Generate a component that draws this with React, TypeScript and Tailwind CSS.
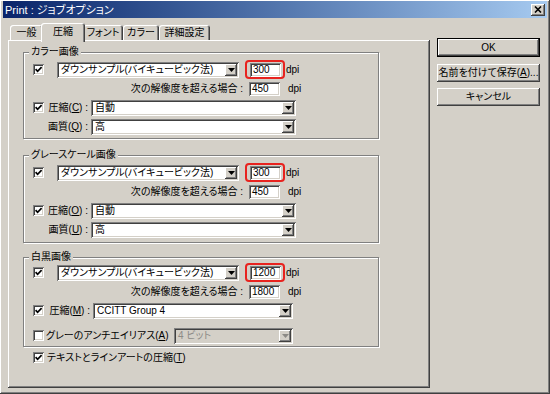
import { ReactNode } from 'react'

const raised =
  'shadow-[inset_-1px_-1px_0_#404040,inset_1px_1px_0_#ffffff,inset_-2px_-2px_0_#808080,inset_2px_2px_0_#d4d0c8]'
const sunken =
  'shadow-[inset_1px_1px_0_#808080,inset_-1px_-1px_0_#ffffff,inset_2px_2px_0_#404040,inset_-2px_-2px_0_#d4d0c8]'
const tab = 'rounded-t-[3px] shadow-[inset_1px_1px_0_#ffffff,inset_-1px_0_0_#404040,inset_-2px_0_0_#808080]'

const K = ({ c }: { c: string }) => <span className="underline underline-offset-[1px]">{c}</span>

const Check = ({ checked }: { checked?: boolean }) => (
  <span className={`flex h-[11px] w-[11px] shrink-0 items-center justify-center bg-white ${sunken}`}>
    {checked && (
      <svg width="11" height="11" viewBox="0 0 11 11">
        <path d="M2.6 5.2 L4.6 7.3 L8.6 3.2" fill="none" stroke="#000" strokeWidth="1.7" />
      </svg>
    )}
  </span>
)

const Combo = ({ text, className, disabled }: { text: string; className: string; disabled?: boolean }) => (
  <div
    className={`flex h-[16px] shrink-0 items-center ${disabled ? 'bg-[#d4d0c8] text-[#8c8a86]' : 'bg-white'} ${sunken} ${className}`}
  >
    <span className="flex-1 truncate pl-[4px]">{text}</span>
    <span className={`mr-[2px] flex h-[12px] w-[12px] items-center justify-center bg-[#d4d0c8] ${raised}`}>
      <svg width="7" height="4" viewBox="0 0 7 4">
        <polygon points="0,0 7,0 3.5,4" fill={disabled ? '#8c8a86' : '#000'} />
      </svg>
    </span>
  </div>
)

const Field = ({ value, className }: { value: string; className?: string }) => (
  <div className={`flex h-[14px] shrink-0 items-center bg-white pl-[3px] ${sunken} ${className ?? ''}`}>
    {value}
  </div>
)

const RedField = ({ value }: { value: string }) => (
  <div className="ml-[6px] flex h-[19px] w-[40px] shrink-0 items-center rounded-[4px] border-2 border-[#e8231f] pl-[3px]">
    <Field value={value} className="w-[31px]" />
  </div>
)

const Group = ({ label, className, children }: { label: string; className?: string; children: ReactNode }) => (
  <div
    className={`relative w-[356px] border border-[#808080] shadow-[inset_1px_1px_0_#ffffff,1px_1px_0_#ffffff] ${className ?? ''}`}
  >
    <span className="absolute -top-[7px] left-[5px] bg-[#d4d0c8] px-[2px] leading-[12px]">{label}</span>
    {children}
  </div>
)

const Row = ({ className, children }: { className?: string; children: ReactNode }) => (
  <div className={`flex h-[19px] items-center ${className ?? ''}`}>{children}</div>
)

const SAMPLE = 'ダウンサンプル(バイキュービック法)'

const Resample = ({ dpi, limit }: { dpi: string; limit: string }) => (
  <>
    <Row className="pl-[9px]">
      <Check checked />
      <Combo text={SAMPLE} className="ml-[13px] w-[182px]" />
      <RedField value={dpi} />
      <span className="ml-[1px]">dpi</span>
    </Row>
    <Row>
      <span className="w-[219px] text-right">次の解像度を超える場合 :</span>
      <Field value={limit} className="ml-[6px] w-[31px]" />
      <span className="ml-[8px]">dpi</span>
    </Row>
  </>
)

export default function App() {
  return (
    <div
      className={`flex h-[394px] w-[550px] flex-col overflow-hidden bg-[#d4d0c8] px-[3px] pt-[1px] text-[10px] leading-[12px] text-black font-['Liberation_Sans','Noto_Sans_CJK_JP',sans-serif] [font-feature-settings:'palt'] ${raised}`}
    >
      <div className="flex h-[17px] items-center bg-gradient-to-r from-[#0a246a] to-[#a6caf0] pl-[2px] pr-[2px]">
        <span className="text-[11px] text-white">Print : ジョブオプション</span>
        <span className={`ml-auto flex h-[12px] w-[14px] items-center justify-center bg-[#d4d0c8] ${raised}`}>
          <svg width="8" height="7" viewBox="0 0 8 7">
            <path d="M1 0.5 L7 6.5 M7 0.5 L1 6.5" stroke="#000" strokeWidth="1.6" />
          </svg>
        </span>
      </div>

      <div className="flex">
        <div className="ml-[5px] mt-[5px] w-[422px]">
          <div className="flex h-[17px] items-end pl-[2px]">
            <div className={`flex h-[15px] w-[33px] items-center justify-center ${tab}`}>一般</div>
            <div
              className={`relative z-10 -mx-[2px] -mb-[2px] flex h-[19px] w-[44px] items-start justify-center bg-[#d4d0c8] pt-[3px] ${tab}`}
            >
              圧縮
            </div>
            <div className={`flex h-[15px] w-[40px] items-center justify-center ${tab}`}>フォント</div>
            <div className={`flex h-[15px] w-[36px] items-center justify-center ${tab}`}>カラー</div>
            <div className={`flex h-[15px] w-[51px] items-center justify-center ${tab}`}>詳細設定</div>
          </div>

          <div className={`flex h-[348px] flex-col pl-[15px] pt-[12px] ${raised}`}>
            <Group label="カラー画像" className="pb-[2px] pt-[7px]">
              <Resample dpi="300" limit="450" />
              <Row className="pl-[9px]">
                <Check checked />
                <span className="w-[44px] text-right">
                  圧縮(<K c="C" />) :
                </span>
                <Combo text="自動" className="ml-[3px] w-[205px]" />
              </Row>
              <Row>
                <span className="w-[64px] text-right">
                  画質(<K c="Q" />) :
                </span>
                <Combo text="高" className="ml-[3px] w-[205px]" />
              </Row>
            </Group>

            <Group label="グレースケール画像" className="mt-[16px] pb-[3px] pt-[7px]">
              <Resample dpi="300" limit="450" />
              <Row className="pl-[9px]">
                <Check checked />
                <span className="w-[44px] text-right">
                  圧縮(<K c="O" />) :
                </span>
                <Combo text="自動" className="ml-[3px] w-[205px]" />
              </Row>
              <Row>
                <span className="w-[64px] text-right">
                  画質(<K c="U" />) :
                </span>
                <Combo text="高" className="ml-[3px] w-[205px]" />
              </Row>
            </Group>

            <Group label="白黒画像" className="mt-[14px] pb-[1px] pt-[5px]">
              <Resample dpi="1200" limit="1800" />
              <Row className="pl-[9px]">
                <Check checked />
                <span className="w-[46px] text-right">
                  圧縮(<K c="M" />) :
                </span>
                <Combo text="CCITT Group 4" className="ml-[3px] w-[200px]" />
              </Row>
              <Row className="mt-[6px] pl-[9px]">
                <Check />
                <span className="w-[130px] pl-[2px]">
                  グレーのアンチエイリアス(<K c="A" />)
                </span>
                <Combo text="4 ビット" className="w-[119px]" disabled />
              </Row>
            </Group>

            <Row className="mt-[1px] pl-[10px]">
              <Check checked />
              <span className="ml-[3px]">
                テキストとラインアートの圧縮(<K c="T" />)
              </span>
            </Row>
          </div>
        </div>

        <div className="ml-[7px] flex w-[103px] flex-col pt-[20px]">
          <div className="h-[19px] border border-black">
            <div className={`flex h-full items-center justify-center ${raised}`}>OK</div>
          </div>
          <div className={`mt-[7px] flex h-[18px] items-center justify-center ${raised}`}>
            名前を付けて保存(<K c="A" />)...
          </div>
          <div className={`mt-[6px] flex h-[18px] items-center justify-center ${raised}`}>キャンセル</div>
        </div>
      </div>
    </div>
  )
}
